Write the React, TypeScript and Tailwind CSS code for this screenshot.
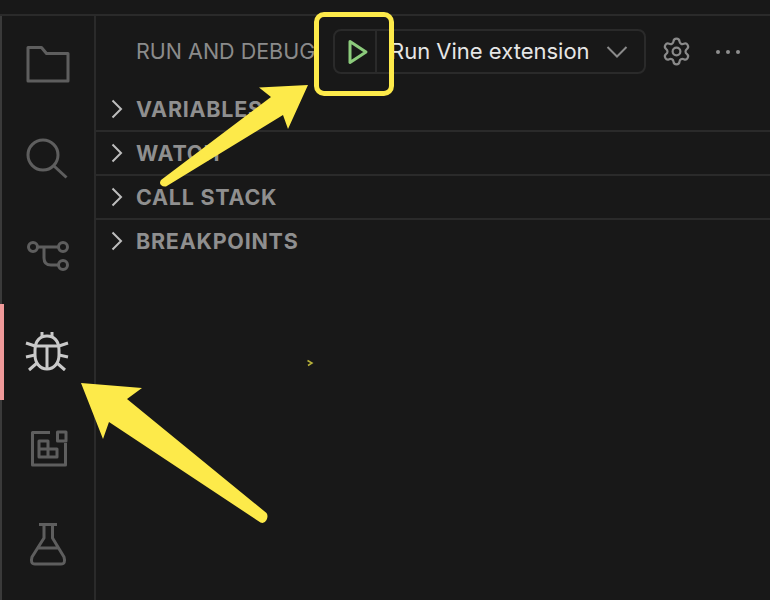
import { Settings } from "lucide-react";
import type { ReactNode } from "react";

const SECTIONS = ["VARIABLES", "WATCH", "CALL STACK", "BREAKPOINTS"];

function ActivityIcon({ active, children }: { active?: boolean; children: ReactNode }) {
  return (
    <div className={`flex h-24 items-center justify-center ${active ? "border-l-4 border-[#f09a9a] pr-1 -ml-0.5 text-[#c9c9c9]" : "text-[#5e5e5e]"}`}>
      <svg width="48" height="48" viewBox="0 0 48 48" fill="none" stroke="currentColor" strokeWidth="3" strokeLinejoin="round">
        {children}
      </svg>
    </div>
  );
}

function Chevron() {
  return (
    <svg width="12" height="20" viewBox="0 0 12 20" fill="none" stroke="#bdbdbd" strokeWidth="2">
      <path d="M1.500 1.500 10 10l-8.500 8.500" />
    </svg>
  );
}

export default function App() {
  return (
    <div className="relative flex h-[600px] w-[770px] flex-col overflow-hidden bg-[#181818] font-['Inter',sans-serif]">
      <div className="h-4 shrink-0 border-b-2 border-[#2a2a2a]" />

      <div className="flex min-h-0 flex-1">
        <nav className="w-24 shrink-0 border-x-2 border-l-[#3a3a3a] border-r-[#2a2a2a]">
          <ActivityIcon>
            <path d="M4 7.500h13.500l5 6H44V41H4z" />
          </ActivityIcon>
          <ActivityIcon>
            <circle cx="19" cy="19" r="15" />
            <path d="m30 30 12.500 11.500" />
          </ActivityIcon>
          <ActivityIcon>
            <circle cx="9" cy="15" r="4.500" />
            <circle cx="39" cy="15" r="4.500" />
            <circle cx="39" cy="33" r="4.500" />
            <path d="M13.500 15h21M20 15v11q0 7 7 7h7.500" />
          </ActivityIcon>
          <ActivityIcon active>
            <path d="M19 4v5M29 4v5" />
            <path d="M24 8c7 0 12 5 12 14v5c0 8-5 14-12 14s-12-6-12-14v-5c0-9 5-14 12-14z" />
            <path d="M12 18h24M24 18v23" />
            <path d="m3 15 9 3M45 15l-9 3M3 29l9-2M45 29l-9-2M6 42l8-7M42 42l-8-7" />
          </ActivityIcon>
          <ActivityIcon>
            <path d="M26 8.500H8.500V41h33V19" />
            <rect x="33.500" y="8" width="8.500" height="9" />
            <path d="M15 17h9v16h-9zM15 25h18v8h-9" />
          </ActivityIcon>
          <ActivityIcon>
            <path d="M15 4.500h18M20 4.500V18L8 37q-2 7 3 7h26q5 0 3-7L28.500 18V4.500M14 28h20" />
          </ActivityIcon>
        </nav>

        <main className="min-w-0 flex-1">
          <header className="flex h-[72px] items-center pb-px pl-10">
            <h2 className="w-[197px] shrink-0 overflow-hidden whitespace-nowrap text-[21.500px] text-[#8b8b8b]">RUN AND DEBUG</h2>
            <div className="flex h-[45px] w-[313px] shrink-0 items-center rounded-lg border-2 border-[#2a2a2a]">
              <div className="flex h-full w-[42px] shrink-0 items-center justify-center border-r-2 border-[#2a2a2a] pl-1.5">
                <svg width="22" height="26" viewBox="0 0 22 26" fill="none" stroke="#8ccb7c" strokeWidth="3" strokeLinejoin="round">
                  <path d="M3 2.500 19 13 3 23.500z" />
                </svg>
              </div>
              <span className="ml-[13px] whitespace-nowrap text-[22px] text-[#e6e6e6]">Run Vine extension</span>
              <svg className="ml-[16px]" width="22" height="12" viewBox="0 0 22 12" fill="none" stroke="#8a8a8a" strokeWidth="2">
                <path d="m1.500 1 9.500 9.500L20.500 1" />
              </svg>
            </div>
            <Settings className="ml-[15px] shrink-0 text-[#8a8a8a]" size={31} strokeWidth={1.700} />
            <div className="ml-6 flex gap-1.5">
              <span className="size-1 rounded-full bg-[#8f8f8f]" />
              <span className="size-1 rounded-full bg-[#8f8f8f]" />
              <span className="size-1 rounded-full bg-[#8f8f8f]" />
            </div>
          </header>

          {SECTIONS.map((title, i) => (
            <div key={title} className={`flex h-11 items-center gap-[13px] border-b-2 pl-[15px] ${i < 3 ? "border-[#2a2a2a]" : "border-transparent"}`}>
              <Chevron />
              <span className="text-[21.500px] font-bold tracking-[0.75px] text-[#8f8f8f]">{title}</span>
            </div>
          ))}
        </main>
      </div>

      <div className="absolute left-[314px] top-[12px] h-[84px] w-[80px] rounded-[10px] border-[5px] border-[#fdea4a]" />

      <svg className="absolute left-0 top-0" width="770" height="600" viewBox="0 0 770 600" fill="#fdea4a">
        <path d="M308 85 259 87.500 271 97 161 180q-2 3 0 5t5 1.500L283 115 288 129z" />
        <path d="M81 383 142 388 127 399 266.500 513q2 3 0 7t-6 2.500L109 422 103 439z" />
        <path d="M307.500 360.500 312 363l-4 2.500" fill="none" stroke="#b7b13a" strokeWidth="1.500" />
      </svg>
    </div>
  );
}
